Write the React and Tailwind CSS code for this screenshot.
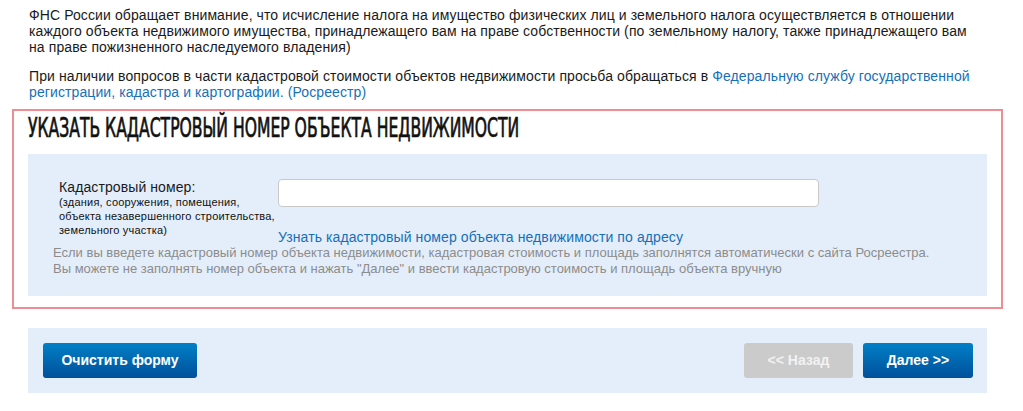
export default function App() {
  return (
    <div className="w-[1023px] h-[411px] bg-white font-['Liberation_Sans',Arial,sans-serif] overflow-hidden">
      {/* Intro text */}
      <div className="ml-[29px] w-[950px] pt-[7px] text-[14px] leading-[16px] tracking-[0.1px] text-[#1a1a1a]">
        <p>
          ФНС России обращает внимание, что исчисление налога на имущество физических лиц и земельного налога осуществляется в отношении
          каждого объекта недвижимого имущества, принадлежащего вам на праве собственности (по земельному налогу, также принадлежащего вам
          на праве пожизненного наследуемого владения)
        </p>
        <p className="mt-[13px]">
          При наличии вопросов в части кадастровой стоимости объектов недвижимости просьба обращаться в{' '}
          <a href="#" className="text-[#1570b8]">
            Федеральную службу государственной регистрации, кадастра и картографии. (Росреестр)
          </a>
        </p>
      </div>

      {/* Cadastral number block */}
      <div className="ml-[12px] mt-[9px] w-[991px] border-2 border-[#ef8d93] px-[14px] pb-[11px]">
        <div className="h-[43px] pt-[2px] whitespace-nowrap">
          <h2 className="inline-block origin-left scale-x-[0.667] font-['DejaVu_Sans_Condensed','DejaVu_Sans',sans-serif] [font-stretch:condensed] [-webkit-text-stroke:0.7px_#111] text-[26px] leading-[30px] text-[#111]">
            УКАЗАТЬ КАДАСТРОВЫЙ НОМЕР ОБЪЕКТА НЕДВИЖИМОСТИ
          </h2>
        </div>

        <div className="bg-[#e4eefa] pt-[25px] pb-[19px]">
          <div className="flex">
            <div className="ml-[31px] w-[219px]">
              <div className="text-[14px] leading-[16px] tracking-[0.1px] text-[#1a1a1a]">Кадастровый номер:</div>
              <div className="text-[11px] leading-[14px] tracking-[0.2px] text-[#111]">
                (здания, сооружения, помещения,
                <br />
                объекта незавершенного строительства,
                <br />
                земельного участка)
              </div>
            </div>
            <div>
              <input
                type="text"
                className="block w-[541px] h-[28px] bg-white border border-[#c9c9c9] rounded-[4px] px-2 text-[14px] outline-none"
              />
              <a href="#" className="block mt-[22px] text-[14px] leading-[16px] tracking-[0.1px] text-[#1570b8]">
                Узнать кадастровый номер объекта недвижимости по адресу
              </a>
            </div>
          </div>
          <div className="ml-[25px] text-[13px] leading-[16px] text-[#8c8c8c]">
            Если вы введете кадастровый номер объекта недвижимости, кадастровая стоимость и площадь заполнятся автоматически с сайта Росреестра.
            <br />
            Вы можете не заполнять номер объекта и нажать "Далее" и ввести кадастровую стоимость и площадь объекта вручную
          </div>
        </div>
      </div>

      {/* Actions */}
      <div className="ml-[28px] mt-[19px] w-[959px] h-[65px] bg-[#e4eefa] flex items-center justify-between pl-[15px] pr-[14px]">
        <button className="w-[154px] h-[35px] rounded-[3px] bg-gradient-to-b from-[#0080c7] to-[#00509a] text-white text-[14px] font-bold">
          Очистить форму
        </button>
        <div className="flex gap-[10px]">
          <button className="w-[109px] h-[35px] rounded-[3px] bg-[#cbcbcb] text-[#f2f2f2] text-[14px] font-bold">
            &lt;&lt; Назад
          </button>
          <button className="w-[110px] h-[35px] rounded-[3px] bg-gradient-to-b from-[#0080c7] to-[#00509a] text-white text-[14px] font-bold">
            Далее &gt;&gt;
          </button>
        </div>
      </div>
    </div>
  )
}
